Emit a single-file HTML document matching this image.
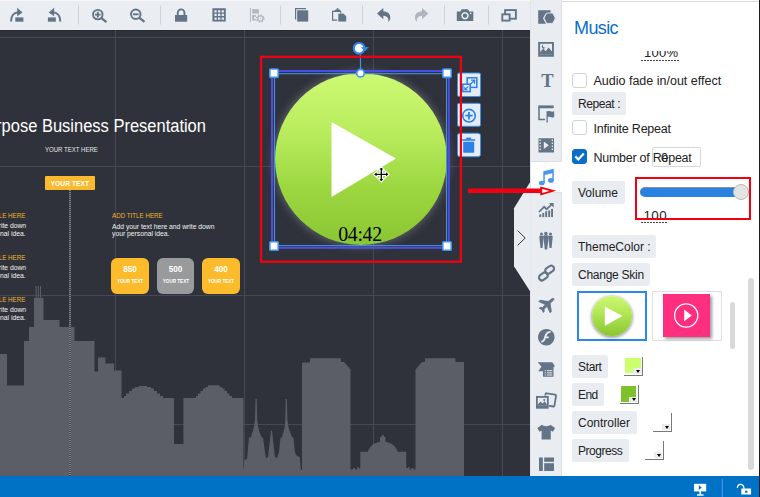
<!DOCTYPE html>
<html><head><meta charset="utf-8"><title>Music</title>
<style>
*{box-sizing:border-box;margin:0;padding:0}
html,body{width:760px;height:497px;overflow:hidden;background:#2f323a;font-family:"Liberation Sans",sans-serif}
#app{position:relative;width:760px;height:497px;overflow:hidden}
.abs{position:absolute}
#toolbar{left:0;top:0;width:530px;height:30px;background:#eaedf1}
#canvas{left:0;top:30px;width:530px;height:446px;background:#2f323a;overflow:hidden}
#bottom{left:0;top:476px;width:760px;height:21px;background:#0072c6}
#strip{left:530px;top:0;width:32px;height:476px;background:#e9ecf1;border-left:1px solid #e1e4e9;border-right:1px solid #dcdfe5}
#panel{left:562px;top:0;width:198px;height:476px;background:#fff}
.gl{position:absolute;background:#454954}
.t{position:absolute;white-space:nowrap;color:#fff}
.lbl{position:absolute;background:#e9ecf1;border-radius:2px;font-size:12px;color:#222;height:23px;line-height:25px;padding:0 6px;white-space:nowrap}
.ptxt{position:absolute;font-size:12.5px;color:#222;white-space:nowrap}
.cb{position:absolute;width:15px;height:15px;border:1px solid #cfd3d8;border-radius:3px;background:#fff}
.sw{position:absolute;width:18.700px;height:18.700px;border-right:1px solid #787878;border-bottom:1px solid #787878;padding:0.700px 1.300px 1.300px 0.700px;background-clip:content-box}
.sw:after{content:"";position:absolute;right:0.300px;bottom:0.500px;width:8.300px;height:5.900px;background:#ececec}
.sw:before{content:"";position:absolute;right:2.200px;bottom:1.900px;width:0;height:0;border-left:2.300px solid transparent;border-right:2.300px solid transparent;border-top:3px solid #000;z-index:2}
.ct{font-size:7.300px;line-height:9px;color:#efb42c;transform:scaleX(0.852)}
.cb1{font-size:6.900px;line-height:8px;color:#f2f2f2;transform:scaleX(0.98)}
.r{right:504.300px;transform-origin:right center}
.l{transform-origin:left center}
.bn{top:234.600px;text-align:center;font-size:8.200px;line-height:10px;font-weight:bold;transform:scaleX(1)}
.bs{top:248.400px;text-align:center;font-size:5px;line-height:6px;font-weight:bold;transform:scaleX(0.915)}
</style></head><body>
<div id="app">
<div id="toolbar" class="abs">
<svg width="530" height="30" viewBox="0 0 530 30" style="position:absolute;left:0;top:0">
  <rect x="0" y="0" width="530" height="1" fill="#f6f7f9"/>
  
  <g fill="#cdd1d8">
    <rect x="78" y="5.5" width="1" height="19"/><rect x="160" y="5.5" width="1" height="19"/>
    <rect x="280" y="5.5" width="1" height="19"/><rect x="362" y="5.5" width="1" height="19"/>
    <rect x="444" y="5.5" width="1" height="19"/><rect x="488" y="5.5" width="1" height="19"/>
  </g>
  <g fill="#627486" stroke="none">
    <!-- icon1 forward -->
    <rect x="15.300" y="17.400" width="8.100" height="4.300"/>
    <path d="M17.200,7.800 L22.600,12.500 L17.200,16.200 Z"/>
    <path d="M11,21.500 C11,16 14,12.600 18,12.300" fill="none" stroke="#627486" stroke-width="2.100"/>
    <!-- icon2 backward -->
    <rect x="47.900" y="17.400" width="7.900" height="4.300"/>
    <path d="M54.100,7.800 L48.700,12.500 L54.100,16.200 Z"/>
    <path d="M60.300,21.500 C60.300,16 57.300,12.600 53.300,12.300" fill="none" stroke="#627486" stroke-width="2.100"/>
    <!-- lock -->
    <rect x="175" y="15" width="12.2" height="6.7"/>
    <path d="M176.8,15.5 V13 a4.3,4.6 0 0 1 8.6,0 V15.5 h-1.9 V13 a2.4,2.7 0 0 0 -4.8,0 V15.5 Z"/>
  <!-- grid -->
    <path fill-rule="evenodd" d="M212.4,8.2 h13.4 v13.4 h-13.4 Z M214.4,10.2 v2.3 h2.3 v-2.3 Z M218,10.2 v2.3 h2.3 v-2.3 Z M221.6,10.2 v2.3 h2.3 v-2.3 Z M214.4,13.8 v2.3 h2.3 v-2.3 Z M218,13.8 v2.3 h2.3 v-2.3 Z M221.6,13.8 v2.3 h2.3 v-2.3 Z M214.4,17.4 v2.3 h2.3 v-2.3 Z M218,17.4 v2.3 h2.3 v-2.3 Z M221.6,17.4 v2.3 h2.3 v-2.3 Z"/>
    <!-- copy -->
    <rect x="297.2" y="10.3" width="11" height="11.3"/>
    <path d="M295,8 h11 v1.2 h-9.8 v10.4 h-1.2 Z"/>
    <!-- paste -->
    <path d="M338.300,13.400 h5 l2.900,2.900 v5.300 h-7.900 Z" stroke="#eaedf1" stroke-width="0.700" paint-order="stroke"/>
    <path d="M332,10.7 h2.8 v-1 h1.6 a1.2,1.6 0 0 1 2.4,0 h1.6 v1 h0.8 v2 h-1.2 v-0.8 h-6.8 v7.6 h3.9 v1.2 h-5.1 Z"/>
    <!-- undo -->
    <path d="M377,13.5 L383.3,7.9 V11.3 C388,11.5 390.6,14.5 390.3,18 C390.1,20 389.3,21.3 388.2,22 C388.9,19.5 388.2,16 383.3,15.8 V19.2 Z"/>
    <!-- camera -->
    <path fill-rule="evenodd" d="M456.8,11.6 h3.6 l1.2,-2.4 h6.4 l1.2,2.4 h4.1 v9.3 h-16.5 Z M465,12 a3.7,3.7 0 1 0 0.01,0 Z M465,13.5 a2.2,2.2 0 1 1 -0.01,0 Z M470.7,12.6 a0.7,0.7 0 1 0 0.01,0Z"/>
  </g>
  <!-- redo disabled -->
  <path fill="#aeb7c1" d="M428.3,13.5 L422,7.9 V11.3 C417.3,11.5 414.7,14.5 415,18 C415.2,20 416,21.3 417.1,22 C416.4,19.5 417.1,16 422,15.8 V19.2 Z"/>
  <!-- settings disabled -->
  <g fill="#b2bac4">
    <rect x="249.900" y="8" width="1" height="13.900"/>
    <rect x="252.100" y="9.100" width="6.800" height="4.500"/>
    <path d="M252.100,15.100 H255.800 V17 H254 V18.700 H255.800 V20.600 H252.100 Z"/>
    <circle cx="260.300" cy="18.500" r="3.300"/>
  </g>
  <circle cx="260.300" cy="18.500" r="3.700" fill="none" stroke="#b2bac4" stroke-width="1.300" stroke-dasharray="1.450 1.450"/>
  <circle cx="260.300" cy="18.500" r="1.900" fill="#eaedf1"/>
  <circle cx="260.300" cy="18.500" r="0.550" fill="#b2bac4"/>
  <!-- zoom in / out -->
  <g fill="none" stroke="#627486" stroke-width="1.7">
    <circle cx="97.800" cy="14.600" r="4.750" stroke-width="1.900"/>
    <path d="M101.400,18.200 L106.500,22.200" stroke-width="2.300"/>
    <path d="M95,14.600 h5.600 M97.800,11.800 v5.600" stroke-width="1.900"/>
    <circle cx="135.800" cy="14.300" r="4.750" stroke-width="1.900"/>
    <path d="M139.400,17.900 L144.500,21.900" stroke-width="2.300"/>
    <path d="M133,14.300 h5.600" stroke-width="1.900"/>
    <!-- layers -->
    <rect x="505.100" y="10.100" width="10.800" height="8.600" stroke-width="1.900"/>
    <rect x="502.300" y="14.300" width="7.300" height="6.300" stroke-width="1.900" fill="#eaedf1"/>
  </g>
</svg>
</div>
<div id="canvas" class="abs">
  <div class="abs" style="left:0;top:0;width:530px;height:1px;background:#292c34"></div>
  <!-- grid -->
  <div class="gl" style="left:115px;top:0;width:1px;height:446px"></div>
  <div class="gl" style="left:244px;top:0;width:1px;height:446px"></div>
  <div class="gl" style="left:373px;top:0;width:1px;height:446px"></div>
  <div class="gl" style="left:502px;top:0;width:1px;height:446px"></div>
  <div class="gl" style="left:0;top:7px;width:530px;height:1px"></div>
  <div class="gl" style="left:0;top:136px;width:530px;height:1px"></div>
  <div class="gl" style="left:0;top:265px;width:530px;height:1px"></div>
  <div class="gl" style="left:0;top:394px;width:530px;height:1px"></div>
  <!-- skyline -->
  <svg class="abs" style="left:0;top:0" width="530" height="446" viewBox="0 30 530 446">
    <path id="sky" fill="#5b5e66" d="M0,476 V354 H7 V385.5 H24 V341 H29 V327 H34 V298 H35.6 V286 H36.6 V298 H37.8 V286 H38.8 V298 H40 V286 H41 V298 H43.5 V320 H59.5 V327 H74.5 V341 H94.5 V371.5 H98 V357.5 H105.4 V363.5 H114 V370.5 H121.5 V398 H124 V396 H126 V393.5 H129 V391 H132 V388.5 H135 V387 H139 V386 H147 V387 H151 V388.5 H154 V391 H157 V393.5 H160 V396 H163 V398 H174 V444 H183.4 V398 H196 V396 H198 V393.5 H200.5 V391 H203 V388.5 H205.5 V387 H208 V385.3 H219.5 V387 H222 V388.5 H224.5 V391 H227 V393.5 H229.5 V396 H232 V398 H243.4 V472 L244.5,460 L247,459 L247.6,452.7 L249,437 L250.5,438 L252.7,431.5 L254,427 L255,420 L255.5,399 L256.7,399 L257.2,420 L258.2,427 L259.5,432 L261.5,437 L263,438 L265,452 L266,458 L268,457 L270,440 L271,430.5 L272,430.5 L273,440 L275,457 L277,458 L279,452 L280.5,438 L282,437 L283.5,432 L284.7,427 L285.3,420 L285.7,399 L286.9,399 L287.4,420 L288.4,427 L290,432 L292,437 L293.5,438 L295,452.7 L297,456 L299.7,457 L301,470 H302 V362.5 H310 V358.3 H341 V362 H344 L350.5,369.6 V469.5 H353 V468 H355 V469.5 H357 V467 H358.5 V468.5 H360.3 V451.8 H368 C369.5,446 374,442.5 380,442 V437 H381.5 V435.3 H384 V437 H385.5 V442 C391.5,442.5 396,446 397.7,451.8 H406.2 V468 H408 V467 H409.5 V469.5 H411.5 V468 H413.5 V469.5 H415.5 V369.6 L422,362 H425 V358.3 H455.5 V362 H464 V476 Z"/>
  </svg>
  <!-- slide text -->
  <div class="t" id="c_title" style="right:323.700px;top:86px;font-size:17.600px;transform-origin:right center;transform:scaleX(0.937)">rpose Business Presentation</div>
  <div class="t" id="c_yth" style="left:44.900px;top:116.300px;font-size:6.900px;line-height:8px;transform-origin:left center;transform:scaleX(0.878);color:#e6e6e6">YOUR TEXT HERE</div>
  <div class="abs" style="left:45px;top:146px;width:49.700px;height:14.400px;background:#f9ba2d;border-radius:1px"></div>
  <div class="t" id="c_yt" style="left:45px;top:146px;width:49.700px;height:14.400px;line-height:15.400px;text-align:center;font-size:7.400px;font-weight:bold;transform:scaleX(0.91)">YOUR TEXT</div>
  <div class="abs" style="left:69.100px;top:160px;width:2px;height:286px;background:repeating-linear-gradient(180deg,#80838c 0,#80838c 1px,#3f424c 1px,#3f424c 2px)"></div>

  <div class="t ct r" style="top:180.900px">D TITLE HERE</div>
  <div class="t cb1 r" style="top:192.300px">here and write down</div>
  <div class="t cb1 r" style="top:199.700px">your personal idea.</div>
  <div class="t ct r" style="top:222.700px">D TITLE HERE</div>
  <div class="t cb1 r" style="top:234.300px">here and write down</div>
  <div class="t cb1 r" style="top:241.700px">your personal idea.</div>
  <div class="t ct r" style="top:264.500px">D TITLE HERE</div>
  <div class="t cb1 r" style="top:276.300px">here and write down</div>
  <div class="t cb1 r" style="top:283.700px">your personal idea.</div>

  <div class="t ct l" id="c_add" style="left:112.300px;top:180.900px">ADD TITLE HERE</div>
  <div class="t cb1 l" id="c_l1" style="left:112.300px;top:192.900px">Add your text here and write down</div>
  <div class="t cb1 l" id="c_l2" style="left:112.300px;top:199.700px">your personal idea.</div>

  <div class="abs" style="left:111px;top:227.500px;width:38px;height:36.300px;background:#fbbb2b;border-radius:6px"></div>
  <div class="abs" style="left:156.600px;top:227.500px;width:37.800px;height:36.300px;background:#999a9b;border-radius:6px"></div>
  <div class="abs" style="left:202px;top:227.500px;width:38px;height:36.300px;background:#fbbb2b;border-radius:6px"></div>
  <div class="t bn" style="left:111px;width:38px">850</div>
  <div class="t bs" style="left:111px;width:38px">YOUR TEXT</div>
  <div class="t bn" style="left:156.600px;width:37.800px">500</div>
  <div class="t bs" style="left:156.600px;width:37.800px">YOUR TEXT</div>
  <div class="t bn" style="left:202px;width:38px">400</div>
  <div class="t bs" style="left:202px;width:38px">YOUR TEXT</div>
  <!-- player -->
  <div class="abs" style="left:274.5px;top:43px;width:172px;height:172px;border-radius:50%;background:linear-gradient(180deg,#cdf973 0%,#b9ec5d 35%,#9dd841 65%,#8ac632 100%);box-shadow:0 0 8px 1px rgba(150,155,168,.5)"></div>
  <svg class="abs" style="left:0;top:0" width="530" height="446" viewBox="0 30 530 446">
    <path d="M331.5,122 L396,158.5 L331.5,197 Z" fill="#fff"/>
    <!-- selection -->
    <rect x="272" y="71" width="176.800" height="176.800" fill="none" stroke="#4b4de6" stroke-width="2"/>
    <rect x="274.500" y="73.700" width="172" height="171.900" fill="none" stroke="#3f92ec" stroke-width="1.100"/>
    <path d="M360.500,54.500 V70" stroke="#3f92ec" stroke-width="1.200" fill="none"/>
    <g fill="#fff" stroke="#3f92ec" stroke-width="1.6">
      <rect x="269.800" y="69" width="8.400" height="8.400" rx="0.800"/>
      <rect x="442.800" y="69" width="8.400" height="8.400" rx="0.800"/>
      <rect x="269.800" y="241.800" width="8.400" height="8.400" rx="0.800"/>
      <rect x="442.800" y="241.800" width="8.400" height="8.400" rx="0.800"/>
      <circle cx="360.500" cy="73.200" r="3.800"/>
    </g>
    <!-- rotate handle -->
    <circle cx="359.100" cy="48.300" r="5.300" fill="#fff" stroke="#2f8bea" stroke-width="2.100"/>
    <path d="M363.700,51.800 L366.600,50.300 L366,53.800 Z" fill="#2f323a"/>
    <path d="M361,47.200 L368.900,46.900 L364.800,51.400 Z" fill="#2f8bea"/>
    <!-- side buttons -->
    <g fill="#e3ecf9" stroke="#3f8fe8" stroke-width="1">
      <rect x="457.500" y="73" width="23" height="23.500" rx="1.500"/>
      <rect x="457.500" y="103.300" width="23" height="23" rx="1.500"/>
      <rect x="457.500" y="133.200" width="23" height="23.500" rx="2.500"/>
    </g>
    <!-- icon: resize -->
    <g fill="none" stroke="#2d80e8" stroke-width="1.500">
      <rect x="467.200" y="77.800" width="9.600" height="9.600"/>
      <rect x="462.800" y="84.200" width="7.400" height="7.400" fill="#e3ecf9"/>
      <path d="M469.500,85.200 L474.300,80.400 M471,80.200 h3.500 v3.500" stroke-width="1.300"/>
      <path d="M468.300,86.300 L465,89.600 M464.800,87 v2.800 h2.800" stroke-width="1.100"/>
    </g>
    <!-- icon: plus circle -->
    <g fill="none" stroke="#2d80e8">
      <circle cx="469" cy="115.700" r="6.300" stroke-width="1.600"/>
      <path d="M465.300,115.700 h7.400 M469,112 v7.400" stroke-width="1.800"/>
    </g>
    <!-- icon: trash -->
    <g fill="#2d80e8">
      <rect x="463.200" y="141.800" width="11" height="11" rx="0.800"/>
      <rect x="462.200" y="139.200" width="13" height="1.600"/>
      <rect x="466.200" y="137.600" width="5" height="2"/>
    </g>
    <!-- red annotation -->
    <rect x="261.100" y="56.800" width="199.800" height="204.900" fill="none" stroke="#f40010" stroke-width="2.200"/>
    <!-- cursor -->
    <g transform="translate(381.300,174.300) scale(1.22) translate(-381,-174)">
      <path d="M381,167.500 L383.600,170.600 H382 V173 H384.400 V171.400 L387.500,174 L384.400,176.600 V175 H382 V177.400 H383.600 L381,180.500 L378.400,177.400 H380 V175 H377.600 V176.600 L374.500,174 L377.600,171.400 V173 H380 V170.600 H378.400 Z" fill="#111" stroke="#fff" stroke-width="0.900"/>
    </g>
  </svg>
  <div class="t" style="left:338.200px;top:192.800px;font-family:'Liberation Serif',serif;font-size:19.900px;color:#000;line-height:22px;letter-spacing:-0.35px">04:42</div>
</div>
<div id="strip" class="abs">
<div class="abs" style="left:0;top:160.500px;width:32px;height:32.500px;background:#fff;border-top:1px solid #dde0e6;border-bottom:1px solid #dde0e6"></div>
<svg class="abs" style="left:-1px;top:0" width="32" height="476" viewBox="530 0 32 476">
 <g fill="#627486">
  <!-- shapes -->
  <path d="M538.200,10.300 H550.600 V13 H546 L543,18.200 L546,23.800 H538.200 Z"/>
  <path stroke="#e9ecf1" stroke-width="0.900" d="M547.600,13 H551.800 C552.500,13 552.900,13.300 553.200,13.800 L555,17.300 C555.300,17.900 555.300,18.500 555,19.100 L553.200,22.600 C552.900,23.100 552.500,23.400 551.800,23.400 H547.600 C546.900,23.400 546.500,23.100 546.200,22.600 L544.400,19.100 C544.100,18.500 544.100,17.900 544.400,17.300 L546.200,13.800 C546.500,13.300 546.900,13 547.600,13 Z"/>
  <!-- image -->
  <path fill-rule="evenodd" d="M538.200,41.900 H553.900 V56.700 H538.200 Z M540.100,43.800 V54.800 H552 V43.800 Z"/>
  <path d="M540.100,54.800 V52 L543.300,48.600 L545.700,51.300 L548.600,47.400 L552,51.500 V54.800 Z"/>
  <path d="M543.300,44.500 a2.100,2.100 0 1 0 2.500,2.800 a1.900,1.900 0 0 1 -2.500,-2.800 Z"/>
  <!-- chart bars -->
  <rect x="539.300" y="214.300" width="1.900" height="2.800"/><rect x="542.300" y="212.900" width="1.900" height="4.200"/>
  <rect x="545.200" y="211.300" width="1.900" height="5.800"/><rect x="548.200" y="210.400" width="1.900" height="6.700"/><rect x="551.100" y="208.900" width="1.900" height="8.200"/>
  <path d="M549,202.900 H553.600 V207.500 Z"/>
  <!-- video -->
  <path fill-rule="evenodd" d="M538.500,138.200 H554 V152.500 H538.500 Z M543.800,141.500 V149 L548.800,145.300 Z M539.500,139.500 v1.500 h1.300 v-1.500 Z M539.500,142.500 v1.500 h1.300 v-1.500 Z M539.500,145.500 v1.500 h1.300 v-1.500 Z M539.500,148.500 v1.500 h1.300 v-1.500 Z M551.700,139.500 v1.500 h1.300 v-1.500 Z M551.700,142.500 v1.500 h1.300 v-1.500 Z M551.700,145.500 v1.500 h1.300 v-1.500 Z M551.700,148.500 v1.500 h1.300 v-1.500 Z"/>
  <!-- flash -->
  <path fill-rule="evenodd" d="M546.300,328.900 a8.300,8.300 0 1 0 0.010,0 Z M550.700,332.800 c-3,0 -3.600,1.800 -4.300,3.800 h2.300 v1.700 h-2.900 c-0.900,2.600 -1.900,4.200 -4.600,4.200 v-1.800 c1.600,0 2.100,-1 2.900,-3.300 c0.900,-2.700 1.900,-6.300 6.600,-6.300 Z"/>
  <!-- plane -->
  <path transform="translate(0,2.800)" stroke="#627486" stroke-width="0.900" stroke-linejoin="round" d="M553.800,297 c0.800,-0.800 -0.300,-1.900 -1.600,-1.200 L548.300,298.700 L540,297.500 L538.800,298.700 L545.300,301.600 L542.600,304.800 L540,304.600 L539.200,305.500 L542,306.800 L543.300,309.600 L544.200,308.800 L544,306.200 L547.200,303.500 L550.100,310 L551.300,308.800 L550.100,300.500 Z"/>
  <!-- shirt -->
  <path d="M542,424.800 L537.300,428 L539.500,431.800 L541.600,430.600 V439.600 H550.800 V430.600 L552.900,431.800 L555.100,428 L550.400,424.800 C549.500,426.600 543,426.600 542,424.800 Z"/>
  <!-- layout -->
  <rect x="539" y="457.500" width="3.800" height="13.500"/><rect x="544.200" y="457.500" width="9.800" height="4.300"/><rect x="544.200" y="463.200" width="9.800" height="7.800"/>
  <!-- list/docs -->
  <path d="M537.800,362.200 H552.300 L555.100,366.500 L553.500,367.100 V376.700 H543 V371.300 H538.200 L541.500,366.800 Z"/>
  <!-- people -->
  <circle cx="541.500" cy="233.900" r="1.500"/><circle cx="545.900" cy="233.400" r="1.750"/><circle cx="550.500" cy="233.900" r="1.500"/>
  <path d="M539.300,236.700 c0,-0.600 0.400,-0.900 0.900,-0.900 h2.600 c0.500,0 0.900,0.300 0.900,0.900 l-0.500,5 l-0.700,6.300 h-2 l-0.700,-6.300 Z"/>
  <path d="M543.400,236.300 c0,-0.600 0.500,-1 1.100,-1 h3 c0.600,0 1.100,0.400 1.100,1 l-0.600,6 l-0.800,7.200 h-2.400 l-0.800,-7.200 Z"/>
  <path d="M548.300,236.700 c0,-0.600 0.400,-0.900 0.900,-0.900 h2.600 c0.500,0 0.900,0.300 0.900,0.900 l-0.500,5 l-0.700,6.300 h-2 l-0.700,-6.300 Z"/>
 </g>
 <g fill="#e9ecf1">
  <rect x="544.700" y="370.200" width="1.200" height="1"/><rect x="546.900" y="370.200" width="5.400" height="1"/>
  <rect x="544.700" y="372.400" width="1.200" height="1"/><rect x="546.900" y="372.400" width="5.400" height="1"/>
  <rect x="544.700" y="374.500" width="1.200" height="1"/><rect x="546.900" y="374.500" width="5.400" height="1"/>
 </g>
 <g fill="none" stroke="#627486">
  <!-- chart line -->
  <path d="M538.900,212 L544.200,206.800 L546.600,209.200 L552,204.200" stroke-width="1.700"/>
  <!-- window+flag -->
  <path d="M552.800,108 V107.500 H539 V119.600 H545" stroke-width="1.500"/>
  <path d="M538.300,106.600 H553.600" stroke-width="2.400"/>
  <!-- link -->
  <rect x="-4.800" y="-2.900" width="9.600" height="5.800" rx="2.900" transform="translate(549.600,269.700) rotate(-36)" stroke-width="2.100"/>
  <rect x="-4.800" y="-2.900" width="9.600" height="5.800" rx="2.900" transform="translate(543.400,276.400) rotate(-36)" stroke-width="2.100"/>
  <!-- gallery back -->
  <rect x="-5.300" y="-6" width="10.600" height="12" rx="1" transform="translate(550,399.900) rotate(9)" stroke-width="1.800"/>
 </g>
 <!-- flag fill -->
 <path d="M547.800,112.200 V122.500 H546.500 V111.200 H547.800 C549.500,110.400 551,112.600 554.200,111.200 V117 C551,118.500 549.500,116 547.800,117 Z" fill="#627486"/>
 <!-- gallery front -->
 <rect x="535.600" y="395.600" width="13.500" height="13.500" fill="#e9ecf1"/>
 <rect x="536" y="396" width="12.700" height="12.700" fill="#627486"/>
 <rect x="537.800" y="397.800" width="9.100" height="7.900" fill="#e9ecf1"/>
 <path d="M537.800,405.700 V404.500 L540.500,401.500 L542.500,403.500 L544.600,401.300 L546.900,404.500 V405.700 Z" fill="#627486"/>
 <circle cx="544.200" cy="400.100" r="1" fill="#627486"/>
 <!-- T -->
 <text x="547.400" y="87.400" text-anchor="middle" font-family="Liberation Serif, serif" font-weight="bold" font-size="18.500" fill="#627486">T</text>
 <!-- music (selected) -->
 <g fill="#4a98ec">
  <ellipse cx="541.800" cy="183" rx="2.900" ry="2.300"/>
  <ellipse cx="550.900" cy="180.400" rx="2.900" ry="2.300"/>
  <path d="M543.300,183 V171.200 L553.800,168.800 V180.400 H552.300 V173.300 L544.800,175 V183 Z"/>
 </g>
</svg>
</div>
<div id="panel" class="abs">
 <div class="abs" style="left:0;top:1px;width:197px;height:1px;background:#d5d9df"></div>
 <div class="abs" style="left:197px;top:0;width:1px;height:476px;background:#1c1c1c"></div>
 <div class="ptxt" id="ttl" style="left:12px;top:16px;font-size:18px;color:#0a6ec8;letter-spacing:-0.6px;line-height:24px">Music</div>

 <!-- clipped 100% -->
 <div class="abs" style="left:78px;top:51px;width:42px;height:10px;overflow:hidden">
   <div class="ptxt" style="left:4px;top:-5.800px;font-size:13px;line-height:15px;letter-spacing:0.3px">100%</div>
   <div class="abs" style="left:1px;top:8.500px;width:38px;height:1px;background:repeating-linear-gradient(90deg,#444 0,#444 1.600px,transparent 1.600px,transparent 3px)"></div>
 </div>

 <div class="cb" style="left:10px;top:73px"></div>
 <div class="ptxt" id="t1" style="left:31.500px;top:73px;line-height:16px">Audio fade in/out effect</div>

 <div class="lbl" id="l1" style="left:10px;top:92px;width:54px;letter-spacing:-0.4px">Repeat :</div>

 <div class="cb" style="left:10px;top:120px"></div>
 <div class="ptxt" id="t2" style="left:31.500px;top:120.500px;line-height:16px;letter-spacing:-0.22px">Infinite Repeat</div>

 <div class="cb" style="left:10px;top:149px;width:15px;height:15px;background:#0a6ec8;border-color:#0a6ec8"></div>
 <svg class="abs" style="left:10px;top:149px" width="15" height="15" viewBox="0 0 15 15"><path d="M3.300,7.400 L6.300,10.400 L11.800,4.600" fill="none" stroke="#fff" stroke-width="2.200"/></svg>
 <div class="ptxt" id="t3" style="left:31.500px;top:149.500px;line-height:16px;letter-spacing:-0.26px">Number of Repeat</div>
 <div class="abs" style="left:89.700px;top:147px;width:49.800px;height:19.500px;border:1px solid #d3d7dc;border-radius:2px"></div>
 <div class="ptxt" style="left:99px;top:149.500px;line-height:16px;font-size:12.500px">0</div>

 <div class="lbl" id="l2" style="left:10px;top:181px;width:53px">Volume</div>
 <!-- slider -->
 <div class="abs" style="left:78px;top:187.200px;width:100px;height:10px;border-radius:5px;background:#2a82e0;border-top:1px solid #8a9099"></div>
 <div class="abs" style="left:170.500px;top:183.800px;width:16.500px;height:16.500px;border-radius:50%;background:#e4e4e4;border:1px solid #b9b9b9"></div>
 <div class="ptxt" style="left:81.500px;top:207.500px;font-size:13.400px;line-height:15px;letter-spacing:0.4px">100</div>
 <div class="abs" style="left:79px;top:222px;width:26px;height:1px;background:repeating-linear-gradient(90deg,#444 0,#444 1.600px,transparent 1.600px,transparent 3px)"></div>
 <div class="abs" style="left:73px;top:177px;width:116px;height:43.400px;border:2px solid #f40010"></div>

 <div class="lbl" id="l3" style="left:10px;top:235px;width:83.500px">ThemeColor :</div>
 <div class="lbl" id="l4" style="left:10px;top:263.300px;width:78px;letter-spacing:-0.25px">Change Skin</div>

 <!-- skins -->
 <div class="abs" style="left:15px;top:291.200px;width:70px;height:49.800px;border:2px solid #2b88ee;background:#fff"></div>
 <div class="abs" style="left:30px;top:296.300px;width:40px;height:40px;border-radius:50%;background:linear-gradient(180deg,#cdf973 0%,#b4e858 40%,#8ac632 100%);box-shadow:0 1px 3px 1px rgba(0,0,0,.35)"></div>
 <svg class="abs" style="left:30px;top:296.300px" width="40" height="40" viewBox="0 0 40 40"><path d="M12.800,10.500 L30.500,20 L12.800,29.800 Z" fill="#fff"/></svg>
 <div class="abs" style="left:89.700px;top:291.200px;width:70.300px;height:49.800px;border:1px solid #e0e0e0;background:#fff"></div>
 <div class="abs" style="left:101.200px;top:294.300px;width:47px;height:42.800px;background:#ff2f7f;box-shadow:2px 2px 3px rgba(0,0,0,.4)"></div>
 <svg class="abs" style="left:101.200px;top:294.300px" width="47" height="43" viewBox="0 0 47 43"><circle cx="23.200" cy="21.500" r="11.600" fill="none" stroke="#fff" stroke-width="1.300"/><path d="M21.200,15.500 L28.800,21.400 L21.200,27.200 Z" fill="#fff"/></svg>
 <!-- scrollbars -->
 <div class="abs" style="left:167.500px;top:301.800px;width:5.800px;height:47px;border-radius:3px;background:#d9d9d9"></div>
 <div class="abs" style="left:186.300px;top:278.400px;width:5.600px;height:191.400px;border-radius:3px;background:#d9d9d9"></div>

 <div class="lbl" id="l5" style="left:10px;top:355.200px;width:36px;letter-spacing:-0.35px">Start</div>
 <div class="sw" style="left:62.300px;top:357.100px;background-color:#ccff6e"></div>
 <div class="lbl" id="l6" style="left:10px;top:383.300px;width:32px;letter-spacing:-0.6px">End</div>
 <div class="sw" style="left:58.100px;top:385.300px;background-color:#7dc22b"></div>
 <div class="lbl" id="l7" style="left:10px;top:411.200px;width:65px">Controller</div>
 <div class="sw" style="left:91.100px;top:412.900px;background-color:#fff"></div>
 <div class="lbl" id="l8" style="left:10px;top:439.300px;width:57px;letter-spacing:-0.45px">Progress</div>
 <div class="sw" style="left:83px;top:441px;background-color:#fff"></div>
</div>
<div id="bottom" class="abs">
<svg class="abs" style="left:0;top:0" width="760" height="21" viewBox="0 476 760 21">
  <rect x="721.800" y="479" width="1" height="18" fill="#4b9be2"/>
  <rect x="759" y="476" width="1" height="21" fill="#1c1c1c"/>
  <g fill="#fff">
    <rect x="694" y="483.800" width="12.200" height="7.600"/>
    <rect x="699.400" y="491" width="1.500" height="3.500"/>
    <rect x="697" y="494.300" width="6.500" height="1.400"/>
    <rect x="741.300" y="488.600" width="9.800" height="6" rx="0.500"/>
  </g>
  <path d="M698.800,485.300 L701.800,487.600 L698.800,489.900 Z" fill="#0072c6"/>
  <rect x="745" y="490.700" width="2.400" height="2" fill="#0072c6"/>
  <path d="M737.300,487.800 C738,483 743.500,483 744,488.600" fill="none" stroke="#fff" stroke-width="1.300"/>
</svg></div>
<svg class="abs" style="left:0;top:0;pointer-events:none" width="760" height="497" viewBox="0 0 760 497">
  <path d="M530.500,181.500 L514,208.300 V266.300 L530.500,292 Z" fill="#e9ecf1"/>
  <path d="M517.600,230.600 L525.200,238 L517.600,245.400" fill="none" stroke="#3a3d45" stroke-width="1"/>
  <path d="M468,190.800 H541.500" stroke="#f40010" stroke-width="4.400" fill="none"/>
  <path d="M541.200,187.700 L552.800,190.900 L541.200,194.300 Z" stroke="#f40010" stroke-width="1.900" fill="#fff0f0" stroke-linejoin="miter"/>
</svg>
</div>
</body></html>
